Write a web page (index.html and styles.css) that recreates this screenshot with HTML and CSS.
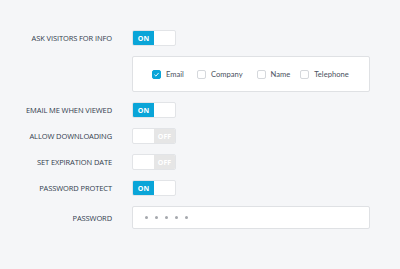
FILE: index.html
```html
<!DOCTYPE html>
<html lang="en">
<head>
  <meta charset="UTF-8">
  <title>Sharing settings</title>
  <link rel="stylesheet" href="styles.css">
</head>
<body>
  <div class="form">
    <div class="row">
      <div class="label">Ask visitors for info</div>
      <div class="toggle on"><span class="knob">ON</span><span class="rest"></span></div>
    </div>

    <div class="row">
      <div class="label"></div>
      <div class="fields">
        <label class="check"><span class="box checked">
          <svg viewBox="0 0 10 10" width="7" height="7"><path d="M2 5.2 L4.2 7.3 L8 2.8" fill="none" stroke="#fff" stroke-width="1.3"/></svg>
        </span>Email</label>
        <label class="check"><span class="box"></span>Company</label>
        <label class="check"><span class="box"></span>Name</label>
        <label class="check"><span class="box"></span>Telephone</label>
      </div>
    </div>

    <div class="row">
      <div class="label">Email me when viewed</div>
      <div class="toggle on"><span class="knob">ON</span><span class="rest"></span></div>
    </div>

    <div class="row">
      <div class="label">Allow downloading</div>
      <div class="toggle off"><span class="rest"></span><span class="knob">OFF</span></div>
    </div>

    <div class="row">
      <div class="label">Set expiration date</div>
      <div class="toggle off"><span class="rest"></span><span class="knob">OFF</span></div>
    </div>

    <div class="row">
      <div class="label">Password protect</div>
      <div class="toggle on"><span class="knob">ON</span><span class="rest"></span></div>
    </div>

    <div class="row">
      <div class="label">Password</div>
      <div class="input">
        <span class="dot"></span><span class="dot"></span><span class="dot"></span><span class="dot"></span><span class="dot"></span>
      </div>
    </div>
  </div>
</body>
</html>
```

FILE: styles.css
```css
body {
  margin: 0;
  background-color: #f5f6f8;
  font-family: 'Open Sans', 'Liberation Sans', sans-serif;
}

.form {
  display: flex;
  flex-direction: column;
  gap: 10px;
  padding-top: 30px;
}

.row {
  display: flex;
  align-items: center;
  gap: 20px;
}

.label {
  width: 112px;
  flex-shrink: 0;
  text-align: right;
  text-transform: uppercase;
  font-size: 7.5px;
  color: #323d4e;
  letter-spacing: -0.1px;
}

.toggle {
  display: flex;
  width: 44px;
  height: 16px;
  box-sizing: border-box;
  border: 1px solid #e2e4e7;
  border-radius: 2px;
  background: #fff;
  overflow: hidden;
}

.toggle .knob,
.toggle .rest {
  flex: 1;
  display: flex;
  align-items: center;
  justify-content: center;
  font-size: 7px;
  font-weight: 700;
  color: #fff;
}

.toggle.on .knob {
  background-color: #0aa5d8;
}

.toggle.off .knob {
  background-color: #e6e6e6;
}

.fields {
  display: flex;
  align-items: center;
  width: 238px;
  height: 36px;
  box-sizing: border-box;
  border: 1px solid #dfe1e4;
  border-radius: 2px;
  background: #fff;
  padding-left: 19px;
}

.check {
  display: flex;
  align-items: center;
  gap: 5px;
  font-family: Lato, 'Open Sans', sans-serif;
  font-size: 7.6px;
  color: #4a5160;
  margin-right: 13px;
}

.check:nth-child(2) { margin-right: 14px; }
.check:nth-child(3) { margin-right: 10px; }

.box {
  width: 9px;
  height: 9px;
  box-sizing: border-box;
  border: 1px solid #d5d8dc;
  border-radius: 2px;
  background: #fff;
  display: flex;
  align-items: center;
  justify-content: center;
}

.box.checked {
  background-color: #0aa5d8;
  border-color: #0aa5d8;
}

.input {
  display: flex;
  align-items: center;
  gap: 7px;
  width: 238px;
  height: 23px;
  box-sizing: border-box;
  border: 1px solid #dfe1e4;
  border-radius: 2px;
  background: #fff;
  padding-left: 12px;
}

.dot {
  width: 3px;
  height: 3px;
  border-radius: 50%;
  background-color: #a5a8ad;
}
```
